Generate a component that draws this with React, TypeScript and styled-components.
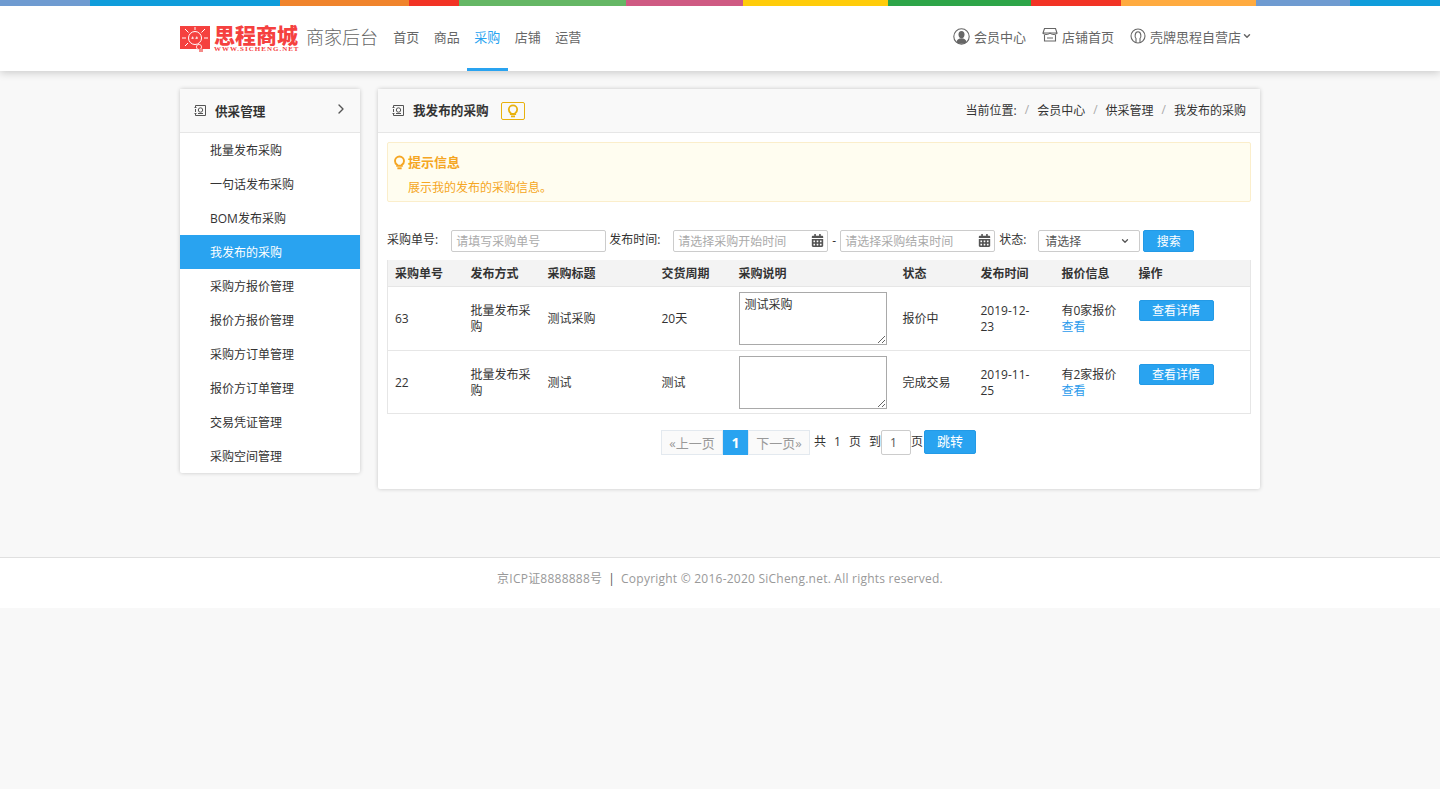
import React from "react";
import styled, { createGlobalStyle } from "styled-components";
import { FaCalendarAlt } from "react-icons/fa";
import { FiChevronDown, FiChevronRight } from "react-icons/fi";

const FONT = `"Open Sans", "Noto Sans CJK SC", "Liberation Sans", sans-serif`;
const BLUE = "#29a3f0";

const GlobalStyle = createGlobalStyle`
  html, body {
    margin: 0;
    padding: 0;
    background: #f8f8f8;
    color: #333;
    font-family: ${FONT};
    font-size: 12px;
  }
  * { box-sizing: border-box; }
`;

const stripes = [
  ["#6f9bd1", 90],
  ["#0f9ddb", 190],
  ["#f0842c", 129],
  ["#f23325", 50],
  ["#65b765", 167],
  ["#cf5a83", 117],
  ["#ffcc0a", 145],
  ["#2ea548", 143],
  ["#f23325", 90],
  ["#ffab40", 135],
  ["#6f9bd1", 94],
  ["#0f9ddb", 90],
] as const;

const Stripe = styled.div`
  display: flex;
  height: 6px;
`;

const StripePart = styled.span<{ $color: string; $grow: number }>`
  background: ${(p) => p.$color};
  flex: ${(p) => p.$grow} 0 0;
`;

const Header = styled.header`
  background: #fff;
  height: 71px;
  box-shadow: 0 2px 8px rgba(0, 0, 0, 0.18);
  position: relative;
`;

const Wrap = styled.div`
  width: 1080px;
  margin: 0 auto;
`;

const HeaderInner = styled(Wrap)`
  display: flex;
  align-items: center;
  justify-content: space-between;
  height: 65px;
`;

const HeaderLeft = styled.div`
  display: flex;
  align-items: center;
  height: 100%;
`;

const Logo = styled.div`
  display: flex;
  align-items: center;
  width: 120px;
  height: 28px;
  flex: none;
`;

const LogoText = styled.div`
  display: flex;
  flex-direction: column;
  margin-left: 2px;
  color: #f5413f;
`;

const LogoName = styled.span`
  font-family: "Noto Sans CJK SC", sans-serif;
  font-size: 21px;
  line-height: 18px;
  font-weight: 900;
  white-space: nowrap;
`;

const LogoUrl = styled.span`
  font-family: "Liberation Serif", serif;
  font-size: 7px;
  line-height: 8px;
  margin-top: 2px;
  font-weight: 700;
  letter-spacing: 1px;
  white-space: nowrap;
`;

const SubTitle = styled.span`
  font-size: 18px;
  color: #666;
  margin: 0 0 6px 6px;
  width: 80px;
  font-weight: 300;
  white-space: nowrap;
`;

const Nav = styled.nav`
  display: flex;
  height: 100%;
`;

const NavItem = styled.a<{ $active?: boolean }>`
  width: 40.5px;
  height: 100%;
  display: flex;
  align-items: center;
  justify-content: center;
  padding-bottom: 2px;
  font-size: 13px;
  color: ${(p) => (p.$active ? BLUE : "#666")};
  border-bottom: 3px solid ${(p) => (p.$active ? BLUE : "transparent")};
`;

const HeaderRight = styled.div`
  display: flex;
  align-items: center;
  gap: 16px;
  padding: 0 8px 5px 0;
  color: #666;
  font-size: 13px;
`;

const HeaderLink = styled.a`
  display: flex;
  align-items: center;
  gap: 4px;
  white-space: nowrap;
`;

const HeadChevron = styled(FiChevronDown)`
  width: 10px;
  height: 10px;
  margin-left: -3px;
  stroke-width: 3.5;
`;

const Body = styled(Wrap)`
  display: flex;
  align-items: flex-start;
  gap: 18px;
  padding-top: 18px;
  height: 486px;
`;

const Side = styled.aside`
  width: 180px;
  background: #fff;
  border-radius: 2px;
  box-shadow: 0 0 4px rgba(0, 0, 0, 0.2);
`;

const PanelHead = styled.div`
  height: 44px;
  background: #f9f9f9;
  border-bottom: 1px solid #e6e6e6;
  display: flex;
  align-items: center;
  padding: 0 14px;
  font-size: 12.6px;
  font-weight: 700;
  color: #333;
`;

const HeadTitle = styled.span`
  margin-left: 8px;
`;

const SideChevron = styled(FiChevronRight)`
  margin-left: auto;
  margin-top: -4px;
  margin-right: -3px;
  font-size: 16px;
  color: #555;
`;

const SideItem = styled.a<{ $active?: boolean }>`
  display: block;
  height: 34px;
  line-height: 32px;
  padding: 2px 0 0 30px;
  font-size: 12px;
  background: ${(p) => (p.$active ? BLUE : "transparent")};
  color: ${(p) => (p.$active ? "#fff" : "#333")};
`;

const Main = styled.main`
  width: 882px;
  height: 400px;
  background: #fff;
  border-radius: 2px;
  box-shadow: 0 0 4px rgba(0, 0, 0, 0.2);
`;

const MainHead = styled(PanelHead)`
  justify-content: space-between;

  ${HeadTitle} {
    margin-bottom: 2px;
  }
`;

const HeadLeft = styled.div`
  display: flex;
  align-items: center;
`;

const TipBadge = styled.span`
  width: 24px;
  height: 18px;
  margin-left: 12px;
  border: 1px solid #e8b10e;
  border-radius: 2px;
  display: flex;
  align-items: center;
  justify-content: center;
`;

const Crumbs = styled.div`
  display: flex;
  margin-bottom: 2px;
  font-size: 12px;
  font-weight: 400;
  color: #333;
`;

const CrumbSep = styled.span`
  color: #aaa;
  margin: 0 8px;
`;

const Content = styled.div`
  padding: 9px 9px 0;
`;

const Alert = styled.div`
  height: 60px;
  background: #fffdf0;
  border: 1px solid #fbeecb;
  border-radius: 2px;
  padding: 9px 4px;
  color: #f5a623;
`;

const AlertTitle = styled.div`
  display: flex;
  align-items: center;
  gap: 1px;
  font-size: 13px;
  font-weight: 700;
  line-height: 20px;
`;

const AlertText = styled.div`
  margin: 8px 0 0 16px;
  font-size: 12px;
  line-height: 16px;
`;

const Filter = styled.div`
  display: flex;
  align-items: center;
  margin-top: 27px;
  height: 23px;
`;

const FilterLabel = styled.span<{ $left?: number }>`
  font-size: 12px;
  color: #333;
  white-space: nowrap;
  margin: 0 0 3px ${(p) => p.$left ?? 0}px;
`;

const FieldBox = styled.div<{ $width: number; $left?: number }>`
  width: ${(p) => p.$width}px;
  height: 22px;
  margin-left: ${(p) => p.$left ?? 0}px;
  margin-right: 3px;
  border: 1px solid #ccc;
  border-radius: 2px;
  padding: 0 4px;
  display: flex;
  align-items: center;
  justify-content: space-between;
  font-size: 12px;
  color: #aaa;
  white-space: nowrap;
`;

const CalIcon = styled(FaCalendarAlt)`
  color: #555;
  font-size: 13px;
  margin-right: -1px;
`;

const Dash = styled.span`
  margin: 0 4px 0 1px;
  color: #333;
`;

const SelectBox = styled(FieldBox)`
  color: #555;
  padding: 0 9px 0 6px;
`;

const SelectChevron = styled(FiChevronDown)`
  width: 10px;
  height: 10px;
  stroke-width: 3;
  color: #555;
`;

const Button = styled.button`
  background: ${BLUE};
  color: #fff;
  border: 1px solid #239ae6;
  border-radius: 2px;
  font-family: ${FONT};
  font-size: 12px;
  padding: 0;
`;

const SearchButton = styled(Button)`
  width: 51px;
  height: 22px;
`;

const Table = styled.table`
  width: 863px;
  margin-top: 8px;
  table-layout: fixed;
  border-collapse: collapse;
  border: 1px solid #e6e6e6;
  border-top: 0;
  font-size: 12px;
`;

const Th = styled.th<{ $w: number }>`
  width: ${(p) => p.$w}px;
  height: 26px;
  padding: 0 7px;
  background: #f3f3f3;
  border-bottom: 1px solid #e6e6e6;
  text-align: left;
  font-weight: 700;
  color: #333;
`;

const Td = styled.td<{ $top?: boolean }>`
  height: 64px;
  padding: ${(p) => (p.$top ? "13px 7px 0" : "2px 7px 0")};
  vertical-align: ${(p) => (p.$top ? "top" : "middle")};
  border-bottom: 1px solid #e6e6e6;
  line-height: 16px;
  color: #333;
`;

const NoteCell = styled(Td)`
  padding-top: 0;
`;

const Tr = styled.tr`
  &:last-child td {
    height: 63px;
  }

  &:last-child ${NoteCell} {
    padding-top: 1px;
  }
`;

const Note = styled.textarea`
  display: block;
  width: 148px;
  height: 53px;
  margin: 0;
  padding: 4px 5px 3px;
  border: 1px solid #a9a9a9;
  font-family: ${FONT};
  font-size: 12px;
  color: #333;
  line-height: 16px;
`;

const DateText = styled.span`
  display: block;
  width: 56px;
`;

const LookLink = styled.a`
  display: block;
  color: #2b9bec;
`;

const DetailButton = styled(Button)`
  display: block;
  width: 75px;
  height: 21px;
`;

const Pager = styled.div`
  display: flex;
  align-items: flex-start;
  justify-content: flex-start;
  margin: 16px 0 0 274px;
  font-size: 12px;
  color: #333;
`;

const PageCell = styled.span<{ $active?: boolean; $w: number }>`
  width: ${(p) => p.$w}px;
  height: 25px;
  display: flex;
  align-items: center;
  justify-content: center;
  background: ${(p) => (p.$active ? BLUE : "#fafafa")};
  color: ${(p) => (p.$active ? "#fff" : "#999")};
  border: 1px solid ${(p) => (p.$active ? BLUE : "#e3e9ef")};
  font-weight: ${(p) => (p.$active ? 700 : 400)};
  font-size: ${(p) => (p.$active ? 14 : 13)}px;
`;

const PagerText = styled.span<{ $left?: number }>`
  line-height: 23px;
  margin-left: ${(p) => p.$left ?? 0}px;
  white-space: pre;
  word-spacing: 0.9px;
`;

const PageInput = styled.span`
  width: 30px;
  height: 25px;
  border: 1px solid #ccc;
  border-radius: 2px;
  display: flex;
  align-items: center;
  padding-left: 8px;
  color: #555;
`;

const JumpButton = styled(Button)`
  width: 52px;
  height: 24px;
  margin-left: 1px;
  font-size: 13px;
  padding-bottom: 2px;
`;

const Footer = styled.footer`
  height: 51px;
  background: #fff;
  border-top: 1px solid #e0e0e0;
  display: flex;
  align-items: center;
  justify-content: center;
  color: #999;
  font-size: 12px;
  letter-spacing: 0.23px;
  padding-bottom: 10px;
`;

const FooterSep = styled.span`
  color: #555;
  margin: 0 6px;
`;

const PanelIcon = () => (
  <svg width="13" height="13" viewBox="0 0 13 13" fill="none" stroke="#555" strokeWidth="1">
    <path d="M1.5 3V1.5H11.5V11.5H1.5V10M1.5 5V8" />
    <path d="M0.5 3.5H2.5M0.5 9.5H2.5" />
    <circle cx="6.5" cy="6" r="2.2" />
    <path d="M4 9.5H9" />
  </svg>
);

const Bulb = ({ color, size }: { color: string; size: number }) => (
  <svg width={size} height={size} viewBox="0 0 14 14" fill="none" stroke={color} strokeWidth="1.8">
    <path d="M4.8 9.2C3.5 8.3 2.8 7 2.8 5.6A4.2 4.2 0 0 1 11.2 5.6C11.2 7 10.5 8.3 9.2 9.2V10H4.8Z" />
    <path d="M5 12.4H9" />
  </svg>
);

const UserIcon = () => (
  <svg width="17" height="17" viewBox="0 0 17 17">
    <circle cx="8.5" cy="8.5" r="7.7" fill="none" stroke="#666" strokeWidth="1.1" />
    <ellipse cx="8.5" cy="6.6" rx="3" ry="3.6" fill="#666" />
    <path d="M3.4 14.2C3.8 11.4 6 10.2 8.5 10.2S13.2 11.4 13.6 14.2C11.8 16.4 5.2 16.4 3.4 14.2Z" fill="#666" />
  </svg>
);

const StoreIcon = () => (
  <svg width="16" height="16" viewBox="0 0 16 16" fill="none" stroke="#666" strokeWidth="1.1" style={{ marginTop: -3 }}>
    <path d="M2.5 1.5H13.5L15 6H1Z" />
    <path d="M1 6C2 8 6 8 8 6.2C10 8 14 8 15 6" />
    <path d="M2.5 8V14H13.5V8M5 11H11" />
  </svg>
);

const ShopIcon = () => (
  <svg width="16" height="16" viewBox="0 0 16 16" fill="none" stroke="#666" strokeWidth="1.1">
    <circle cx="8" cy="8" r="7" />
    <path d="M6 14.5V10.5C4.6 9.6 4.6 3.8 8 3.8S11.4 9.6 10 10.5V14.5" />
  </svg>
);

const SunLogo = () => (
  <svg width="32" height="26" viewBox="0 0 32 26">
    <rect width="30" height="23" fill="#f5413f" />
    <circle cx="15" cy="12" r="6.5" fill="none" stroke="#fff" strokeWidth="1" />
    <path
      d="M15 1V4M5 3L8.5 6.5M25 3L21.5 6.5M2 12H6M24 12H28M5 20L8 17"
      stroke="#fff"
      strokeWidth="1"
    />
    <path d="M12 13C12.5 10 13 10 13 13M16 13C16.5 10 17.5 10 17 13" fill="none" stroke="#fff" />
    <circle cx="19" cy="21" r="2.6" fill="#f5413f" stroke="#fff" strokeWidth="0.8" />
    <rect x="19" y="23" width="4" height="3" fill="#f58a88" />
  </svg>
);

const sideItems = [
  "批量发布采购",
  "一句话发布采购",
  "BOM发布采购",
  "我发布的采购",
  "采购方报价管理",
  "报价方报价管理",
  "采购方订单管理",
  "报价方订单管理",
  "交易凭证管理",
  "采购空间管理",
];

const columns: [string, number][] = [
  ["采购单号", 76],
  ["发布方式", 77],
  ["采购标题", 114],
  ["交货周期", 77],
  ["采购说明", 164],
  ["状态", 78],
  ["发布时间", 81],
  ["报价信息", 77],
  ["操作", 119],
];

const rows = [
  { id: "63", title: "测试采购", period: "20天", note: "测试采购", status: "报价中", date: "2019-12-23", quotes: "有0家报价" },
  { id: "22", title: "测试", period: "测试", note: "", status: "完成交易", date: "2019-11-25", quotes: "有2家报价" },
];

export default function App() {
  return (
    <>
      <GlobalStyle />
      <Header>
        <Stripe>
          {stripes.map(([color, grow], i) => (
            <StripePart key={i} $color={color} $grow={grow} />
          ))}
        </Stripe>
        <HeaderInner>
          <HeaderLeft>
            <Logo>
              <SunLogo />
              <LogoText>
                <LogoName>思程商城</LogoName>
                <LogoUrl>WWW.SICHENG.NET</LogoUrl>
              </LogoText>
            </Logo>
            <SubTitle>商家后台</SubTitle>
            <Nav>
              <NavItem>首页</NavItem>
              <NavItem>商品</NavItem>
              <NavItem $active>采购</NavItem>
              <NavItem>店铺</NavItem>
              <NavItem>运营</NavItem>
            </Nav>
          </HeaderLeft>
          <HeaderRight>
            <HeaderLink>
              <UserIcon />
              会员中心
            </HeaderLink>
            <HeaderLink>
              <StoreIcon />
              店铺首页
            </HeaderLink>
            <HeaderLink>
              <ShopIcon />
              壳牌思程自营店
              <HeadChevron />
            </HeaderLink>
          </HeaderRight>
        </HeaderInner>
      </Header>

      <Body>
        <Side>
          <PanelHead>
            <PanelIcon />
            <HeadTitle>供采管理</HeadTitle>
            <SideChevron />
          </PanelHead>
          {sideItems.map((item) => (
            <SideItem key={item} $active={item === "我发布的采购"}>
              {item}
            </SideItem>
          ))}
        </Side>

        <Main>
          <MainHead>
            <HeadLeft>
              <PanelIcon />
              <HeadTitle>我发布的采购</HeadTitle>
              <TipBadge>
                <Bulb color="#e8b10e" size={14} />
              </TipBadge>
            </HeadLeft>
            <Crumbs>
              当前位置:
              <CrumbSep>/</CrumbSep>
              会员中心
              <CrumbSep>/</CrumbSep>
              供采管理
              <CrumbSep>/</CrumbSep>
              我发布的采购
            </Crumbs>
          </MainHead>
          <Content>
            <Alert>
              <AlertTitle>
                <Bulb color="#f5a623" size={15} />
                提示信息
              </AlertTitle>
              <AlertText>展示我的发布的采购信息。</AlertText>
            </Alert>

            <Filter>
              <FilterLabel>采购单号:</FilterLabel>
              <FieldBox $width={155} $left={13}>请填写采购单号</FieldBox>
              <FilterLabel>发布时间:</FilterLabel>
              <FieldBox $width={155} $left={13}>
                请选择采购开始时间
                <CalIcon />
              </FieldBox>
              <Dash>-</Dash>
              <FieldBox $width={155}>
                请选择采购结束时间
                <CalIcon />
              </FieldBox>
              <FilterLabel $left={1}>状态:</FilterLabel>
              <SelectBox $width={102} $left={12}>
                请选择
                <SelectChevron />
              </SelectBox>
              <SearchButton>搜索</SearchButton>
            </Filter>

            <Table>
              <thead>
                <tr>
                  {columns.map(([name, w]) => (
                    <Th key={name} $w={w}>
                      {name}
                    </Th>
                  ))}
                </tr>
              </thead>
              <tbody>
                {rows.map((r) => (
                  <Tr key={r.id}>
                    <Td>{r.id}</Td>
                    <Td>批量发布采购</Td>
                    <Td>{r.title}</Td>
                    <Td>{r.period}</Td>
                    <NoteCell>
                      <Note defaultValue={r.note} />
                    </NoteCell>
                    <Td>{r.status}</Td>
                    <Td>
                      <DateText>{r.date}</DateText>
                    </Td>
                    <Td>
                      {r.quotes}
                      <LookLink>查看</LookLink>
                    </Td>
                    <Td $top>
                      <DetailButton>查看详情</DetailButton>
                    </Td>
                  </Tr>
                ))}
              </tbody>
            </Table>

            <Pager>
              <PageCell $w={62}>«上一页</PageCell>
              <PageCell $w={25} $active>1</PageCell>
              <PageCell $w={62}>下一页»</PageCell>
              <PagerText $left={4}>共  1  页  到</PagerText>
              <PageInput>1</PageInput>
              <PagerText>页</PagerText>
              <JumpButton>跳转</JumpButton>
            </Pager>
          </Content>
        </Main>
      </Body>

      <Footer>
        京ICP证8888888号<FooterSep>|</FooterSep>Copyright © 2016-2020 SiCheng.net. All rights reserved.
      </Footer>
    </>
  );
}
